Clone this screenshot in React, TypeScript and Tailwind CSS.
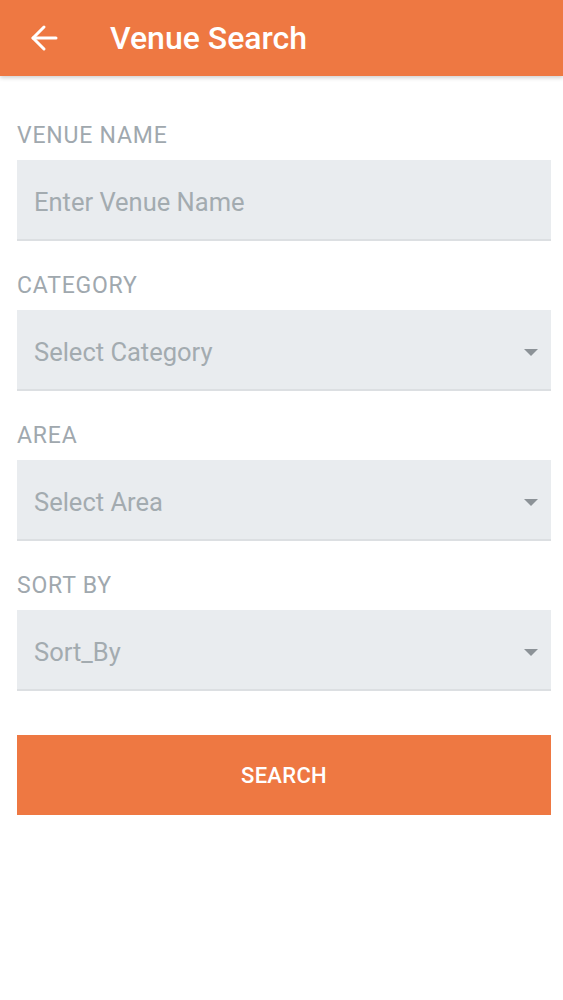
import { ChangeEvent, useState } from 'react';

const fields = [
  { label: 'VENUE NAME', placeholder: 'Enter Venue Name', select: false },
  { label: 'CATEGORY', placeholder: 'Select Category', select: true },
  { label: 'AREA', placeholder: 'Select Area', select: true },
  { label: 'SORT BY', placeholder: 'Sort_By', select: true },
];

const BackArrow = () => (
  <svg width="30" height="28" viewBox="0 0 30 28" fill="none" stroke="#fff" strokeWidth="3" strokeLinecap="round" strokeLinejoin="round">
    <path d="M27 14H4" />
    <path d="M15 3L4 14l11 11" />
  </svg>
);

const Caret = () => (
  <svg width="16" height="8" viewBox="0 0 16 8">
    <path d="M1 0h14L8 7z" fill="#8c9297" />
  </svg>
);

const App = () => {
  const [name, setName] = useState('');

  return (
    <div className="min-h-screen bg-white" style={{ fontFamily: 'Roboto, "Liberation Sans", sans-serif' }}>
      {/* Toolbar */}
      <div className="h-[76px] bg-[#ee7842] flex items-center shadow-[0_2px_4px_rgba(0,0,0,0.18)] relative z-10">
        <button className="w-[110px] pl-[29px] flex items-center">
          <BackArrow />
        </button>
        <h1 className="text-white text-[32px] font-medium leading-none">Venue Search</h1>
      </div>

      {/* Form */}
      <div className="pl-[17px] pr-[12px] pt-[48px] flex flex-col gap-[33px]">
        {fields.map((f) => (
          <div key={f.label} className="flex flex-col">
            <label className="text-[23px] leading-[24px] tracking-[0.8px] text-[#a0a8ae] mb-[12px]">{f.label}</label>
            <div className="h-[81px] bg-[#e9ecef] border-b-2 border-[#dcdfe2] flex items-center pl-[17px] pr-[12px] pt-[6px]">
              {f.select ? (
                <>
                  <span className="flex-1 text-[25.5px] text-[#a3abb0]">{f.placeholder}</span>
                  <Caret />
                </>
              ) : (
                <input
                  value={name}
                  onChange={(e: ChangeEvent<HTMLInputElement>) => setName(e.target.value)}
                  placeholder={f.placeholder}
                  className="w-full bg-transparent outline-none text-[25.5px] text-[#555] placeholder:text-[#a3abb0]"
                />
              )}
            </div>
          </div>
        ))}

        <button className="mt-[11px] h-[80px] bg-[#ee7842] text-white text-[22px] font-medium tracking-[0.3px]">
          SEARCH
        </button>
      </div>
    </div>
  );
};

export default App;
